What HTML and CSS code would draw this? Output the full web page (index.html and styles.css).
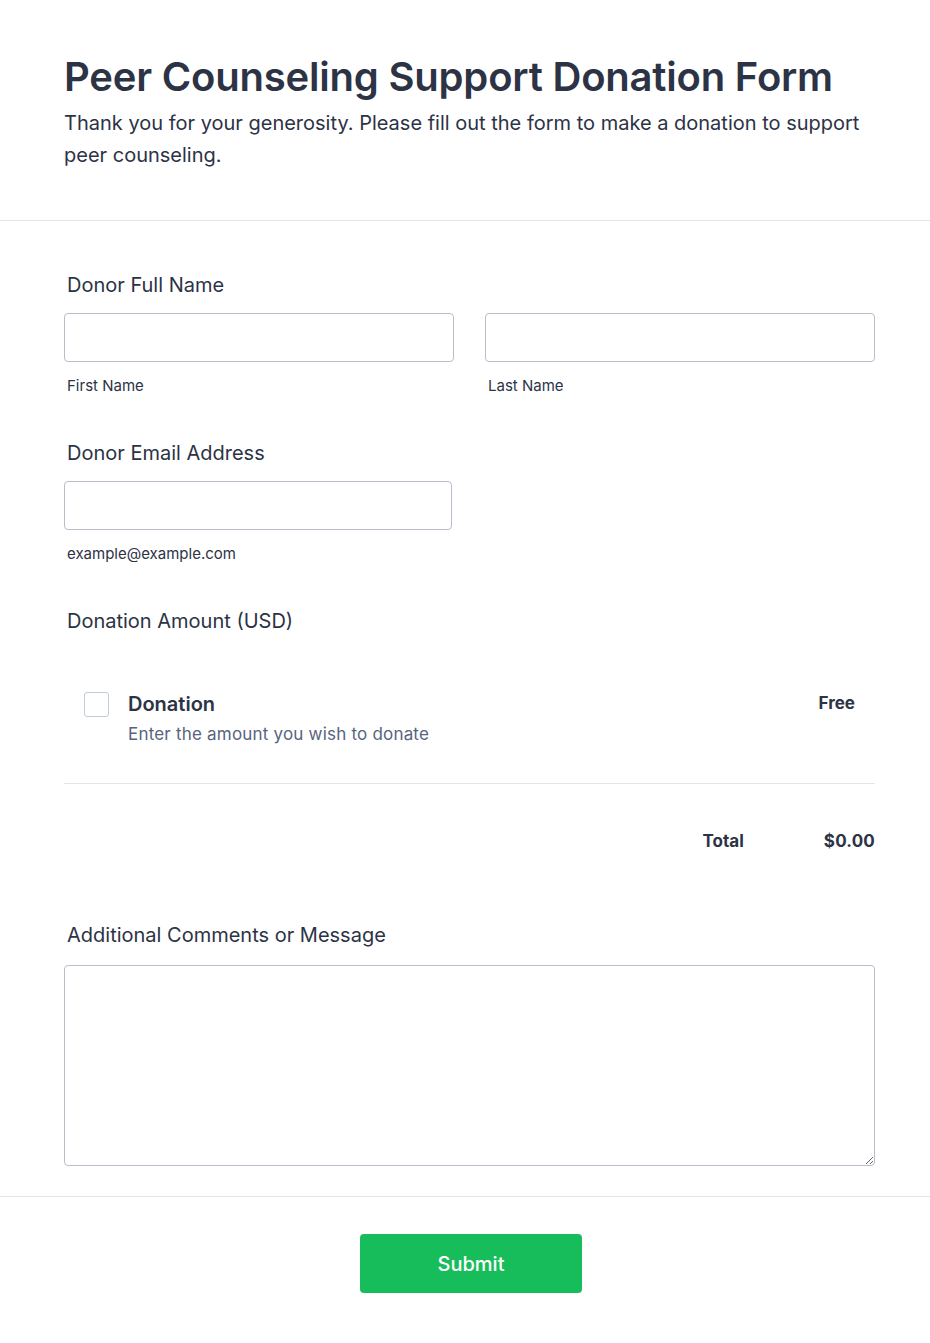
FILE: index.html
```html
<!DOCTYPE html>
<html lang="en">
<head>
    <meta charset="UTF-8">
    <meta name="viewport" content="width=device-width, initial-scale=1.0">
    <title>Peer Counseling Support Donation Form</title>
    <link rel="stylesheet" href="styles.css">
</head>
<body>
    <div class="form-page">
        <div class="form-header">
            <h1>Peer Counseling Support Donation Form</h1>
            <p class="subtitle">Thank you for your generosity. Please fill out the form to make a donation to support peer counseling.</p>
        </div>

        <div class="form-body">
            <div class="field">
                <label class="field-label">Donor Full Name</label>
                <div class="name-row">
                    <div class="sub-field">
                        <input type="text" class="text-input">
                        <span class="sub-label">First Name</span>
                    </div>
                    <div class="sub-field">
                        <input type="text" class="text-input">
                        <span class="sub-label">Last Name</span>
                    </div>
                </div>
            </div>

            <div class="field">
                <label class="field-label">Donor Email Address</label>
                <div class="sub-field email">
                    <input type="email" class="text-input">
                    <span class="sub-label">example@example.com</span>
                </div>
            </div>

            <div class="field">
                <label class="field-label">Donation Amount (USD)</label>
                <div class="product">
                    <span class="checkbox"></span>
                    <div class="product-text">
                        <div class="product-name">Donation</div>
                        <div class="product-desc">Enter the amount you wish to donate</div>
                    </div>
                    <div class="product-price">Free</div>
                </div>
                <div class="total-row">
                    <span class="total-label">Total</span>
                    <span class="total-value">$0.00</span>
                </div>
            </div>

            <div class="field comments">
                <label class="field-label">Additional Comments or Message</label>
                <textarea class="text-area"></textarea>
            </div>
        </div>

        <div class="form-footer">
            <button class="submit-btn">Submit</button>
        </div>
    </div>
</body>
</html>
```

FILE: styles.css
```css
body {
    margin: 0;
    font-family: Inter, "Noto Sans", sans-serif;
    color: #2c3345;
    background: #fff;
}

.form-page {
    width: 930px;
}

.form-header {
    padding: 52px 64px 49px;
    border-bottom: 1px solid #e3e5ec;
}

h1 {
    margin: 0;
    font-size: 40px;
    font-weight: 600;
    line-height: 50px;
    letter-spacing: -0.2px;
}

.subtitle {
    margin: 5px 0 0;
    font-size: 20px;
    line-height: 32px;
}

.form-body {
    padding: 50px 55px 30px 64px;
}

.field {
    margin-bottom: 43px;
}

.field-label {
    display: block;
    font-size: 20px;
    line-height: 28px;
    padding-left: 3px;
    margin-bottom: 14px;
}

.name-row {
    display: flex;
    gap: 31px;
}

.sub-field {
    display: flex;
    flex-direction: column;
    width: 390px;
}

.sub-field.email {
    width: 388px;
}

.text-input {
    box-sizing: border-box;
    width: 100%;
    height: 49px;
    border: 1px solid #b8bdc9;
    border-radius: 4px;
    margin: 0;
}

.sub-label {
    font-size: 15px;
    line-height: 20px;
    margin-top: 14px;
    padding-left: 3px;
}

.product {
    display: flex;
    align-items: flex-start;
    padding: 41px 20px 37px 20px;
    border-bottom: 1px solid #e3e5ec;
}

.checkbox {
    box-sizing: border-box;
    width: 25px;
    height: 25px;
    border: 1px solid #c3cad8;
    border-radius: 3px;
    margin-top: 2px;
    margin-right: 19px;
}

.product-text {
    flex: 1;
}

.product-name {
    font-size: 20px;
    font-weight: 600;
    line-height: 28px;
}

.product-desc {
    font-size: 17px;
    line-height: 24px;
    color: #57647e;
    margin-top: 4px;
    letter-spacing: 0.2px;
}

.product-price {
    font-size: 17px;
    font-weight: 700;
    line-height: 24px;
    margin-top: 1px;
}

.total-row {
    display: flex;
    justify-content: flex-end;
    align-items: baseline;
    padding-top: 47px;
    padding-bottom: 27px;
}

.total-label {
    font-size: 17px;
    font-weight: 700;
    margin-right: 80px;
}

.total-value {
    font-size: 17px;
    font-weight: 700;
    letter-spacing: 0.2px;
}

.comments {
    margin-bottom: 0;
}

.comments .field-label {
    margin-bottom: 16px;
}

.text-area {
    display: block;
    box-sizing: border-box;
    width: 811px;
    height: 201px;
    border: 1px solid #b8bdc9;
    border-radius: 4px;
    margin: 0;
    resize: vertical;
}

.form-footer {
    border-top: 1px solid #e3e5ec;
    padding: 37px 0 40px;
    display: flex;
    justify-content: center;
}

.submit-btn {
    width: 222px;
    height: 59px;
    background: #18bd5b;
    color: #fff;
    border: none;
    border-radius: 4px;
    font-family: Inter, "Noto Sans", sans-serif;
    font-size: 20px;
    font-weight: 500;
    margin-left: 12px;
}
```
